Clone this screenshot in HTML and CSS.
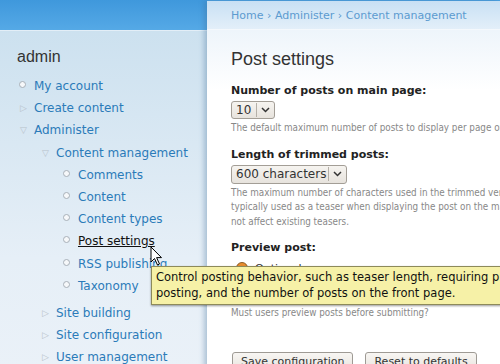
FILE: index.html
```html
<!DOCTYPE html>
<html lang="en">
<head>
    <meta charset="UTF-8">
    <title>Post settings | admin</title>
    <link rel="stylesheet" href="styles.css">
</head>
<body>
    <div class="page">
        <div class="sidebar">
            <div class="topband"></div>
            <h2 class="user">admin</h2>
            <ul class="menu">
                <li class="leaf"><a href="#">My account</a></li>
                <li class="collapsed"><a href="#">Create content</a></li>
                <li class="expanded"><a href="#">Administer</a>
                    <ul class="menu">
                        <li class="expanded"><a href="#">Content management</a>
                            <ul class="menu">
                                <li class="leaf"><a href="#">Comments</a></li>
                                <li class="leaf"><a href="#">Content</a></li>
                                <li class="leaf"><a href="#">Content types</a></li>
                                <li class="leaf"><a href="#" class="hover">Post settings</a></li>
                                <li class="leaf"><a href="#">RSS publishing</a></li>
                                <li class="leaf"><a href="#">Taxonomy</a></li>
                            </ul>
                        </li>
                        <li class="collapsed"><a href="#">Site building</a></li>
                        <li class="collapsed"><a href="#">Site configuration</a></li>
                        <li class="collapsed"><a href="#">User management</a></li>
                    </ul>
                </li>
            </ul>
        </div>

        <div class="main">
            <div class="breadcrumb">
                <a href="#">Home</a> › <a href="#">Administer</a> › <a href="#">Content management</a>
            </div>
            <div class="content">
                <h1 class="title">Post settings</h1>

                <div class="form-item">
                    <label>Number of posts on main page:</label>
                    <div class="select"><span class="value">10</span><span class="arrow"><svg width="9" height="6" viewBox="0 0 9 6"><path d="M1 1 L4.5 4.5 L8 1" fill="none" stroke="#333" stroke-width="1.5"/></svg></span></div>
                    <div class="description">The default maximum number of posts to display per page on overview pages such as the main page.</div>
                </div>

                <div class="form-item">
                    <label>Length of trimmed posts:</label>
                    <div class="select wide"><span class="value">600 characters</span><span class="arrow"><svg width="9" height="6" viewBox="0 0 9 6"><path d="M1 1 L4.5 4.5 L8 1" fill="none" stroke="#333" stroke-width="1.5"/></svg></span></div>
                    <div class="description">The maximum number of characters used in the trimmed version of a post. Drupal will use this setting to determine at which offset long posts should be trimmed. The trimmed version of a post is<br>typically used as a teaser when displaying the post on the main page, in XML feeds, etc. To disable teasers, set to 'Unlimited'. Note that this setting will<br>not affect existing teasers.</div>
                </div>

                <div class="form-item">
                    <label>Preview post:</label>
                    <div class="radios">
                        <div class="radio"><span class="dot"></span><span>Optional</span></div>
                        <div class="radio"><span class="dot off"></span><span>Required</span></div>
                    </div>
                    <div class="description">Must users preview posts before submitting?</div>
                </div>

                <div class="actions">
                    <button class="btn">Save configuration</button>
                    <button class="btn">Reset to defaults</button>
                </div>
            </div>
        </div>
    </div>

    <div class="tooltip">Control posting behavior, such as teaser length, requiring previews before<br>posting, and the number of posts on the front page.</div>

    <svg class="cursor" width="14" height="21" viewBox="0 0 14 21">
        <path d="M1 1 L1 16 L4.5 12.5 L7.5 19 L9.5 18 L6.6 11.6 L11.5 11.6 Z" fill="#fff" stroke="#000" stroke-width="1"/>
    </svg>
</body>
</html>
```

FILE: styles.css
```css
body {
    margin: 0;
    font-family: "DejaVu Sans", sans-serif;
    font-size: 12px;
    background: #4a9fe0;
    overflow: hidden;
}

.page {
    display: grid;
    grid-template-columns: 207px 293px;
    height: 364px;
    overflow: hidden;
}

.sidebar {
    background: linear-gradient(#c9dfee, #e6eff7 70%, #eaf1f8);
}

.topband {
    height: 30px;
    background: linear-gradient(#3f98dc, #55a9e6);
    border-bottom: 1px solid #e3eef7;
}

.user {
    margin: 17px 0 9px 17px;
    font-family: "Liberation Sans", sans-serif;
    font-weight: normal;
    font-size: 16px;
    color: #333;
}

.menu {
    list-style: none;
    margin: 0;
    padding: 0 0 0 22px;
}

.menu .menu {
    padding-left: 10px;
}

.menu .menu .menu {
    padding-bottom: 5px;
}

.menu li {
    position: relative;
    padding-left: 12px;
    font-size: 12px;
    line-height: 22.2px;
}

.menu a {
    color: #2b7bb9;
    text-decoration: none;
}

.menu a.hover {
    color: #111;
    text-decoration: underline;
}

.menu li::before {
    position: absolute;
    left: -2px;
    top: 0;
    color: #b8c2cb;
    font-size: 9px;
}

.menu li.leaf::before {
    content: "";
    left: -3px;
    top: 6px;
    width: 5px;
    height: 5px;
    border: 1px solid #a8b0b8;
    border-radius: 50%;
    background: #f6f8fa;
}

.menu li.collapsed::before {
    content: "▷";
}

.menu li.expanded::before {
    content: "▽";
}

.main {
    margin-top: 1px;
    background: #fff;
    box-shadow: -3px 0 5px rgba(60, 110, 150, 0.35);
    overflow: hidden;
    min-width: 0;
}

.breadcrumb {
    height: 29px;
    box-sizing: border-box;
    padding: 8px 0 0 24px;
    background: linear-gradient(#c8e0f4, #e3eff9);
    border-bottom: 1px solid #f4f8fc;
    font-size: 11px;
    color: #5c9bd0;
    white-space: nowrap;
}

.breadcrumb a {
    color: #5c9bd0;
    text-decoration: none;
}

.content {
    padding: 18px 0 0 24px;
    background: linear-gradient(#eef5fb, #fff 60px);
    white-space: nowrap;
}

.title {
    margin: 0 0 14px;
    font-family: "Liberation Sans", sans-serif;
    font-weight: normal;
    font-size: 18px;
    line-height: 22px;
    color: #333;
}

.form-item {
    margin-bottom: 12px;
}

.form-item label {
    display: block;
    font-weight: bold;
    font-size: 11px;
    line-height: 14px;
    color: #222;
    margin-bottom: 3px;
}

.select {
    display: flex;
    width: max-content;
    align-items: center;
    height: 18px;
    box-sizing: border-box;
    border: 1px solid #a39e96;
    border-radius: 3px;
    background: linear-gradient(#f6f4f0, #e7e3dd);
    font-size: 12px;
    color: #333;
}

.select .value {
    padding: 0 5px 0 4px;
    border-right: 1px solid #b5b0a8;
    line-height: 14px;
}

.select .arrow {
    display: flex;
    align-items: center;
    padding: 0 4px;
}

.select.wide {
    height: 19px;
}

.select.wide .value {
    width: 87px;
}

.description {
    margin-top: 2px;
    font-family: "DejaVu Sans Condensed", "DejaVu Sans", sans-serif;
    font-stretch: semi-condensed;
    font-size: 9.8px;
    line-height: 14.5px;
    color: #888;
}

.radios {
    margin: 3px 0 8px;
}

.radio {
    display: flex;
    align-items: center;
    height: 20px;
    font-size: 11px;
    color: #333;
    padding-left: 5px;
}

.dot {
    width: 10px;
    height: 10px;
    border-radius: 50%;
    border: 1px solid #8a5a20;
    background: radial-gradient(circle, #5a3410 25%, #e98c2e 35%);
    margin-right: 7px;
}

.dot.off {
    border-color: #999;
    background: #f4f4f4;
}

.actions {
    margin-top: 31px;
    display: flex;
    gap: 11px;
}

.btn {
    font-family: "DejaVu Sans", sans-serif;
    font-size: 11px;
    color: #333;
    padding: 2px 8px;
    border: 1px solid #9e9a94;
    border-radius: 3px;
    background: linear-gradient(#f8f6f3, #e8e4de);
    margin-left: 1px;
}

.tooltip {
    position: absolute;
    left: 151px;
    top: 266px;
    width: 380px;
    padding: 3px 4px;
    background: #f6f1a7;
    border: 1px solid #8d8a5a;
    box-shadow: 0 1px 2px rgba(0, 0, 0, 0.4);
    font-size: 11.5px;
    line-height: 15.5px;
    color: #111;
    white-space: nowrap;
}

.cursor {
    position: absolute;
    left: 150px;
    top: 246px;
}
```
